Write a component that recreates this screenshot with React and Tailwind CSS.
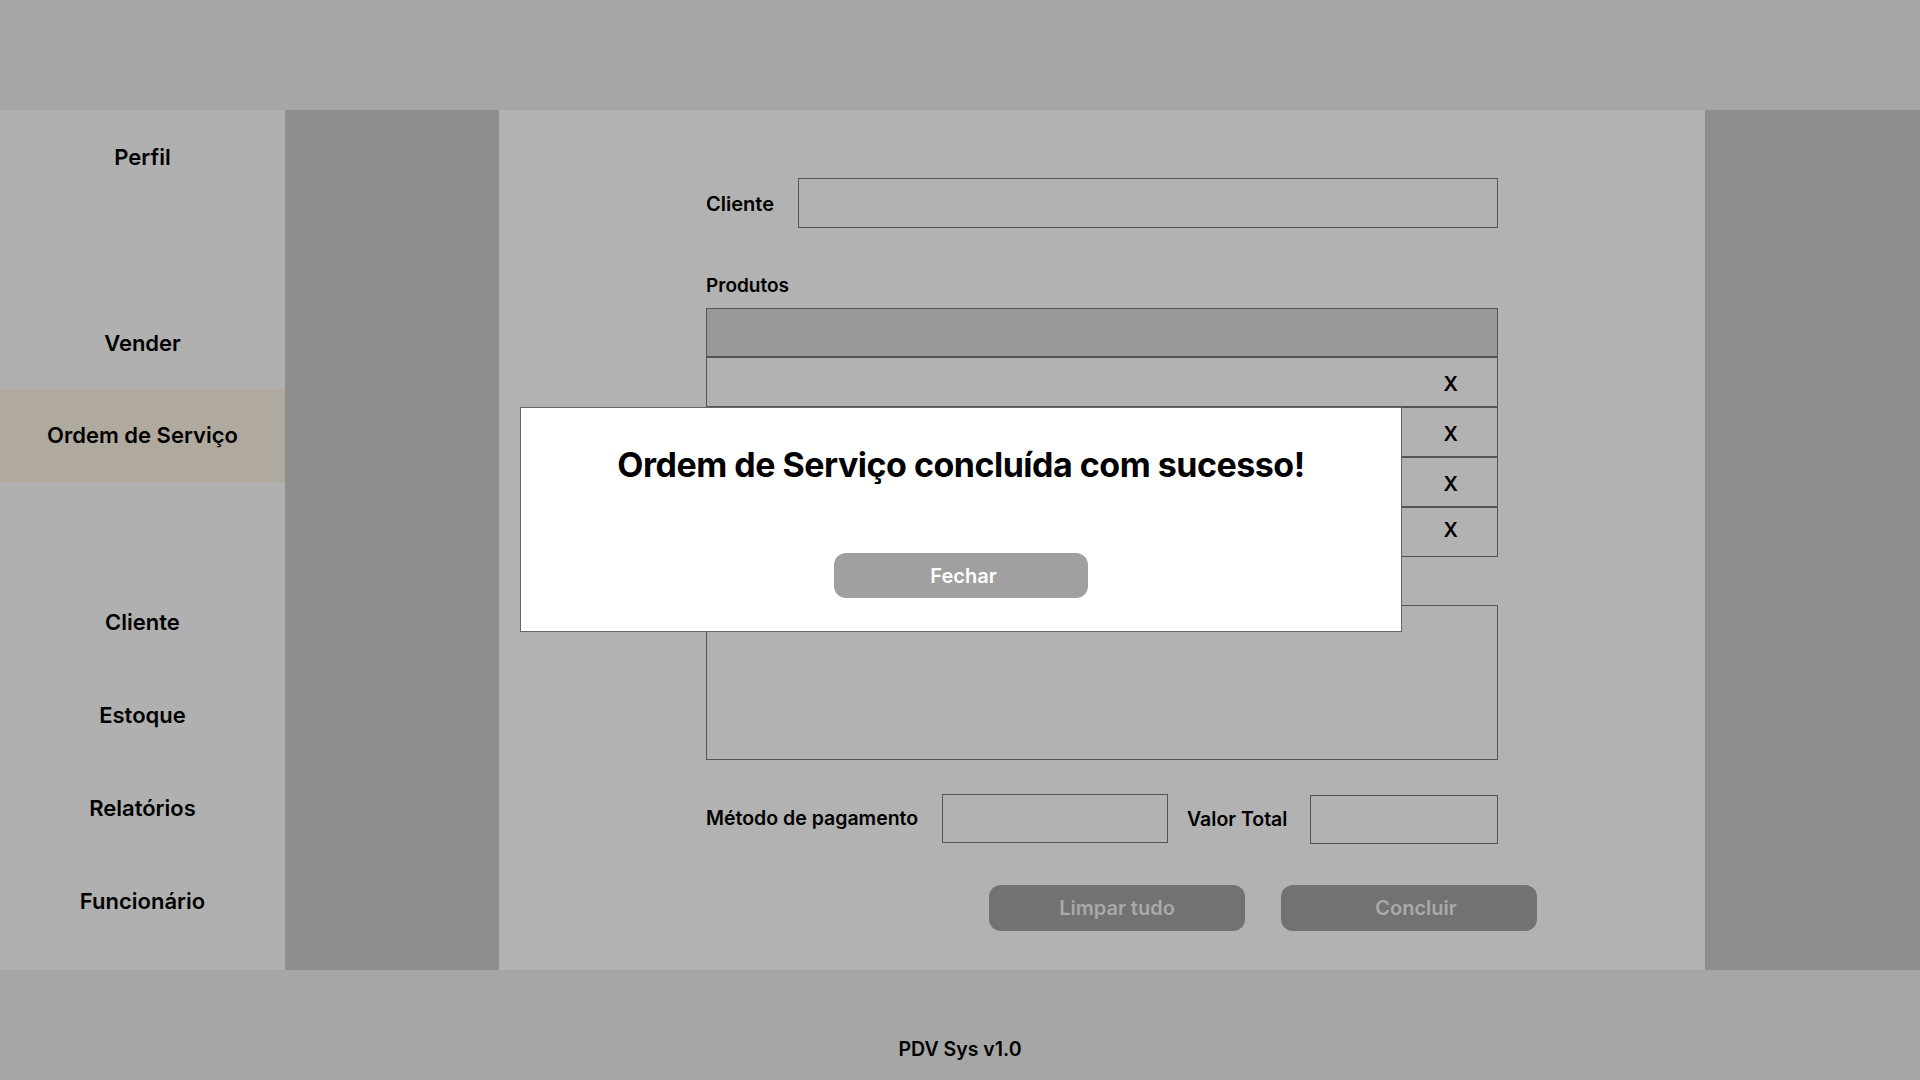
const navItems = [
  { label: "Perfil" },
  { label: "" },
  { label: "Vender" },
  { label: "Ordem de Serviço", active: true },
  { label: "" },
  { label: "Cliente" },
  { label: "Estoque" },
  { label: "Relatórios" },
  { label: "Funcionário" },
];

const rows = [1, 2, 3, 4];

export default function App() {
  return (
    <div className="relative flex h-[1080px] w-[1920px] flex-col overflow-hidden font-['Inter',sans-serif] text-black">
      <header className="h-[110px] bg-[#a6a6a6]" />

      <div className="flex h-[860px]">
        <nav className="flex w-[285px] flex-col bg-[#b0b0b0]">
          {navItems.map((item, i) => (
            <div
              key={i}
              className={
                item.active
                  ? "flex h-[93px] items-center justify-center bg-[#b0a99d] text-[22px] font-semibold"
                  : "flex h-[93px] items-center justify-center pt-[2px] text-[22px] font-semibold"
              }
            >
              {item.label}
            </div>
          ))}
        </nav>

        <div className="w-[214px] bg-[#8e8e8e]" />

        <main className="flex-1 bg-[#b2b2b2] pl-[207px] pt-[68px]">
          <div className="w-[792px]">
            <div className="flex items-center">
              <span className="mt-[2px] w-[92px] text-[20px] font-semibold">Cliente</span>
              <div className="h-[50px] flex-1 border border-[#555]" />
            </div>

            <div className="mt-[46px] text-[19px] font-semibold leading-[24px]">Produtos</div>

            <div className="mt-[10px] border border-[#555]">
              <div className="h-[49px] border-b-2 border-[#555] bg-[#999999]" />
              {rows.map((r) => (
                <div
                  key={r}
                  className={
                    r < 4
                      ? "flex h-[50px] items-center justify-end border-b-2 border-[#555] pr-[39px] pt-[4px] text-[20px] font-semibold"
                      : "flex h-[48px] items-center justify-end pb-[5px] pr-[39px] text-[20px] font-semibold"
                  }
                >
                  X
                </div>
              ))}
            </div>

            <div className="mt-[14px] text-[19px] font-semibold leading-[24px]">Observações</div>
            <div className="mt-[10px] h-[155px] border border-[#555]" />

            <div className="mt-[33px] flex items-center">
              <span className="w-[236px] text-[19.5px] font-semibold">Método de pagamento</span>
              <div className="h-[49px] w-[226px] border border-[#555]" />
              <span className="ml-[19px] mt-[3px] w-[123px] text-[19.5px] font-semibold">Valor Total</span>
              <div className="mt-[2px] h-[49px] w-[188px] border border-[#555]" />
            </div>

            <div className="mt-[41px] flex gap-[36px] pl-[283px]">
              <button className="h-[46px] w-[256px] shrink-0 rounded-[12px] bg-[#727272] text-[20px] font-semibold text-[#a9a9a9]">
                Limpar tudo
              </button>
              <button className="h-[46px] w-[256px] shrink-0 rounded-[12px] bg-[#727272] pl-[14px] text-[20px] font-semibold text-[#a9a9a9]">
                Concluir
              </button>
            </div>
          </div>
        </main>

        <div className="w-[215px] bg-[#8e8e8e]" />
      </div>

      <footer className="flex h-[110px] justify-center bg-[#a6a6a6] pt-[67px]">
        <span className="text-[19.5px] font-semibold leading-[24px]">PDV Sys v1.0</span>
      </footer>

      <div className="absolute left-[520px] top-[407px] flex h-[225px] w-[882px] flex-col items-center border border-[#666] bg-white">
        <h2 className="mt-[36px] text-[34px] font-bold leading-[42px] tracking-[-0.5px]">
          Ordem de Serviço concluída com sucesso!
        </h2>
        <button className="mt-[67px] h-[45px] w-[254px] rounded-[12px] bg-[#a0a0a0] pl-[5px] text-[20px] font-semibold text-white">
          Fechar
        </button>
      </div>
    </div>
  );
}
